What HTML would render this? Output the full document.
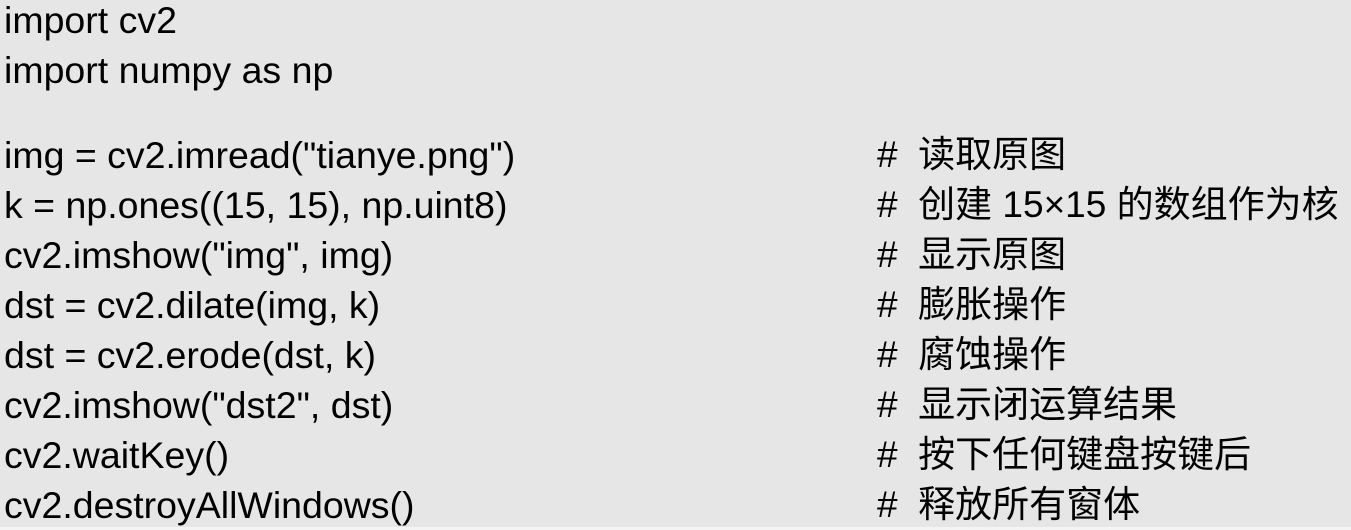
<!DOCTYPE html>
<html><head><meta charset="utf-8"><style>
html,body{margin:0;padding:0;}
body{width:1351px;height:530px;background:#e6e6e6;overflow:hidden;position:relative;font-family:"Liberation Sans","Noto Sans CJK SC",sans-serif;font-size:37.5px;color:#000;}
.l{position:absolute;left:4px;height:50px;line-height:50px;white-space:pre;}
.c{position:absolute;left:877px;height:50px;line-height:50px;white-space:pre;font-size:37px;}
.bot{position:absolute;left:0;right:0;top:527px;height:3px;background:#f4f4f4;}
</style></head><body>
<div class="l" style="top:-5px">import cv2</div>
<div class="l" style="top:45px">import numpy as np</div>
<div class="l" style="top:130px">img = cv2.imread("tianye.png")</div>
<div class="l" style="top:180px">k = np.ones((15, 15), np.uint8)</div>
<div class="l" style="top:230px">cv2.imshow("img", img)</div>
<div class="l" style="top:280px">dst = cv2.dilate(img, k)</div>
<div class="l" style="top:330px">dst = cv2.erode(dst, k)</div>
<div class="l" style="top:380px">cv2.imshow("dst2", dst)</div>
<div class="l" style="top:430px">cv2.waitKey()</div>
<div class="l" style="top:480px">cv2.destroyAllWindows()</div>
<div class="c" style="top:130px">#  读取原图</div>
<div class="c" style="top:180px">#  创建 15×15 的数组作为核</div>
<div class="c" style="top:230px">#  显示原图</div>
<div class="c" style="top:280px">#  膨胀操作</div>
<div class="c" style="top:330px">#  腐蚀操作</div>
<div class="c" style="top:380px">#  显示闭运算结果</div>
<div class="c" style="top:430px">#  按下任何键盘按键后</div>
<div class="c" style="top:480px">#  释放所有窗体</div>
<div class="bot"></div>
</body></html>
